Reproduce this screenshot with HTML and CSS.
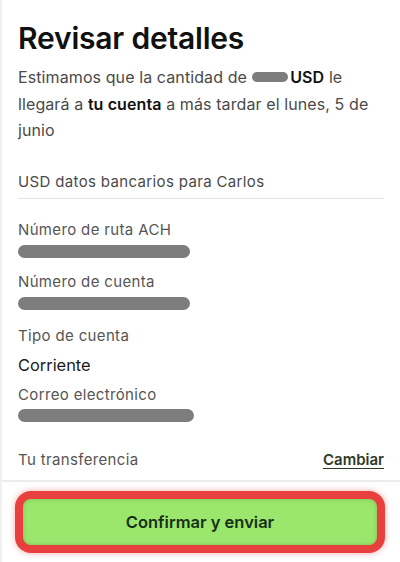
FILE: index.html
```html
<!DOCTYPE html>
<html lang="es">
<head>
    <meta charset="UTF-8">
    <meta name="viewport" content="width=device-width, initial-scale=1.0">
    <title>Revisar detalles</title>
    <link rel="stylesheet" href="styles.css">
</head>
<body>
    <div class="page">
        <div class="content">
            <h1>Revisar detalles</h1>
            <p class="intro">Estimamos que la cantidad de <span class="mask mask-inline"></span> <b>USD</b> le llegará a <b>tu cuenta</b> a más tardar el lunes, 5 de junio</p>

            <div class="section-title">USD datos bancarios para Carlos</div>

            <div class="field field-first">
                <div class="label">Número de ruta ACH</div>
                <div class="mask mask-bar"></div>
            </div>
            <div class="field">
                <div class="label">Número de cuenta</div>
                <div class="mask mask-bar"></div>
            </div>
            <div class="field field-gap">
                <div class="label">Tipo de cuenta</div>
                <div class="value">Corriente</div>
            </div>
            <div class="field field-tight">
                <div class="label">Correo electrónico</div>
                <div class="mask mask-bar mask-long"></div>
            </div>

            <div class="transfer">
                <span>Tu transferencia</span>
                <a href="#" class="change">Cambiar</a>
            </div>
        </div>

        <div class="footer">
            <div class="highlight-ring">
                <button class="confirm">Confirmar y enviar</button>
            </div>
        </div>
    </div>
</body>
</html>
```

FILE: styles.css
```css
body {
    margin: 0;
    font-family: Inter, "Noto Sans", sans-serif;
    background-color: #fff;
    color: #4a4a4a;
}

.page {
    width: 400px;
    height: 562px;
    border-left: 2px solid #f0f0f0;
    box-sizing: border-box;
}

.content {
    padding: 17px 16px 0 16px;
}

h1 {
    margin: 0;
    font-size: 30px;
    font-weight: 600;
    letter-spacing: -0.2px;
    color: #111;
    line-height: 42px;
}

.intro {
    margin: 5px 0 0 0;
    font-size: 16px;
    line-height: 26.5px;
    letter-spacing: 0.1px;
    color: #4a4a4a;
}

.intro b {
    color: #111;
    font-weight: 600;
}

.mask {
    background-color: #7d7d7d;
    border-radius: 8px;
}

.mask-inline {
    display: inline-block;
    width: 36px;
    height: 10px;
    margin-right: -2px;
    vertical-align: 1px;
}

.section-title {
    margin-top: 28px;
    padding-bottom: 6px;
    border-bottom: 1px solid #e4e4e4;
    font-size: 15px;
    line-height: 20px;
    letter-spacing: 0.35px;
}

.field {
    margin-top: 14px;
}

.field-first {
    margin-top: 21px;
}

.field-gap {
    margin-top: 16px;
}

.field-tight {
    margin-top: 8px;
}

.label {
    font-size: 15px;
    line-height: 20px;
    letter-spacing: 0.35px;
    color: #555;
}

.mask-bar {
    width: 172px;
    height: 13px;
    margin-top: 5px;
}

.mask-long {
    width: 176px;
    margin-top: 4px;
}

.value {
    font-size: 16.4px;
    line-height: 24px;
    margin-top: 7px;
    color: #1a1a1a;
}

.transfer {
    display: flex;
    justify-content: space-between;
    align-items: center;
    margin-top: 28px;
    font-size: 15px;
    line-height: 20px;
    letter-spacing: 0.35px;
    color: #555;
}

.change {
    color: #2e3a26;
    font-weight: 600;
    letter-spacing: 0;
    text-decoration: underline;
    text-underline-offset: 3px;
}

.footer {
    margin-top: 10px;
    border-top: 2px solid #ececec;
    padding: 9px 15px 0 13px;
}

.highlight-ring {
    padding: 8px;
    border-radius: 16px;
    background-color: #e8403f;
    box-shadow: 0 0 6px rgba(232, 64, 63, 0.45);
}

.confirm {
    display: block;
    width: 100%;
    height: 46px;
    border: none;
    border-radius: 8px;
    background-color: #9be66c;
    color: #183017;
    font-family: Inter, "Noto Sans", sans-serif;
    font-size: 16.5px;
    font-weight: 600;
    box-shadow: inset 0 0 4px rgba(80, 120, 40, 0.35);
}
```
